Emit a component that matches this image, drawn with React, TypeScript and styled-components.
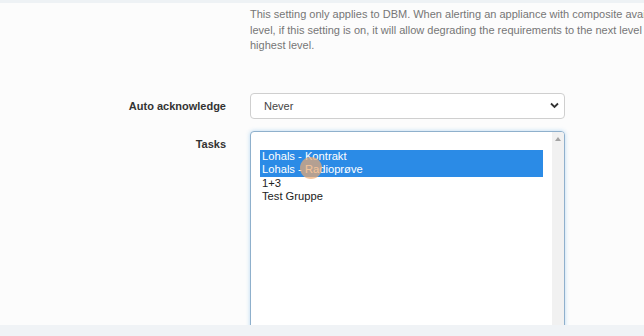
import styled, { createGlobalStyle } from 'styled-components';

const GlobalStyle = createGlobalStyle`
  html, body {
    margin: 0;
    padding: 0;
    overflow: hidden;
    background: #fcfcfc;
  }
  body {
    font-family: 'Liberation Sans', Arial, sans-serif;
  }
`;

const TASKS = [
  { name: 'Lohals - Kontrakt', selected: true },
  { name: 'Lohals - Radioprøve', selected: true },
  { name: '1+3', selected: false },
  { name: 'Test Gruppe', selected: false },
];

function App() {
  return (
    <Page>
      <GlobalStyle />
      <TopStrip />
      <Content>
        <HelpRow>
          <Spacer />
          <HelpText>
            This setting only applies to DBM. When alerting an appliance with composite availability
            <br />
            level, if this setting is on, it will allow degrading the requirements to the next level until the
            <br />
            highest level.
          </HelpText>
        </HelpRow>

        <FormRow $top={39}>
          <Label $pad={7}>Auto acknowledge</Label>
          <SelectBox>
            <span>Never</span>
            <svg width="9" height="7" viewBox="0 0 9 7">
              <path d="M1 1.5 L4.5 5 L8 1.5" fill="none" stroke="#333" strokeWidth="1.8" />
            </svg>
          </SelectBox>
        </FormRow>

        <FormRow $top={12}>
          <Label $pad={7}>Tasks</Label>
          <ListBox>
            <Options>
              {TASKS.map((t) => (
                <Option key={t.name} $selected={t.selected}>
                  {t.name}
                </Option>
              ))}
            </Options>
            <ScrollTrack>
              <ArrowUp />
            </ScrollTrack>
            <ClickDot />
          </ListBox>
        </FormRow>
      </Content>
      <BottomStrip />
    </Page>
  );
}

export default App;

const Page = styled.div`
  width: 644px;
  height: 336px;
  display: flex;
  flex-direction: column;
  overflow: hidden;
`;

const TopStrip = styled.div`
  height: 3px;
  background: #eef2f5;
  flex-shrink: 0;
`;

const BottomStrip = styled.div`
  height: 11px;
  background: #f0f3f6;
  flex-shrink: 0;
`;

const Content = styled.div`
  flex: 1;
  overflow: hidden;
  padding-top: 4px;
`;

const HelpRow = styled.div`
  display: flex;
  gap: 24px;
`;

const Spacer = styled.div`
  width: 226px;
  flex-shrink: 0;
`;

const HelpText = styled.p`
  margin: 0;
  font-size: 11px;
  line-height: 15.5px;
  color: #767676;
  white-space: nowrap;
`;

const FormRow = styled.div<{ $top: number }>`
  display: grid;
  grid-template-columns: 226px 315px;
  column-gap: 24px;
  margin-top: ${(p) => p.$top}px;
  align-items: start;
`;

const Label = styled.div<{ $pad: number }>`
  text-align: right;
  font-size: 11px;
  font-weight: bold;
  color: #333;
  padding-top: ${(p) => p.$pad}px;
`;

const SelectBox = styled.div`
  box-sizing: border-box;
  height: 26px;
  border: 1px solid #cfcfcf;
  border-radius: 4px;
  background: #fff;
  display: flex;
  align-items: center;
  justify-content: space-between;
  padding: 0 5px 0 13px;
  font-size: 11px;
  color: #444;
`;

const ListBox = styled.div`
  position: relative;
  box-sizing: border-box;
  height: 210px;
  border: 1px solid #8fb0cc;
  border-radius: 4px;
  background: #fff;
  box-shadow: 0 0 4px rgba(102, 175, 233, 0.45);
  display: flex;
`;

const Options = styled.div`
  flex: 1;
  padding: 18px 9px 0 9px;
  display: flex;
  flex-direction: column;
`;

const Option = styled.div<{ $selected: boolean }>`
  font-size: 11.2px;
  line-height: 13.5px;
  padding-left: 2px;
  color: ${(p) => (p.$selected ? '#fff' : '#222')};
  background: ${(p) => (p.$selected ? '#2b8be6' : 'transparent')};
`;

const ScrollTrack = styled.div`
  width: 12px;
  background: #f1f1f1;
  display: flex;
  justify-content: center;
  padding-top: 5px;
  border-radius: 0 3px 3px 0;
`;

const ArrowUp = styled.div`
  width: 0;
  height: 0;
  border-left: 3.5px solid transparent;
  border-right: 3.5px solid transparent;
  border-bottom: 4px solid #a3a3a3;
`;

const ClickDot = styled.div`
  position: absolute;
  left: 49px;
  top: 25px;
  width: 22px;
  height: 22px;
  border-radius: 50%;
  background: rgba(240, 170, 110, 0.7);
`;
